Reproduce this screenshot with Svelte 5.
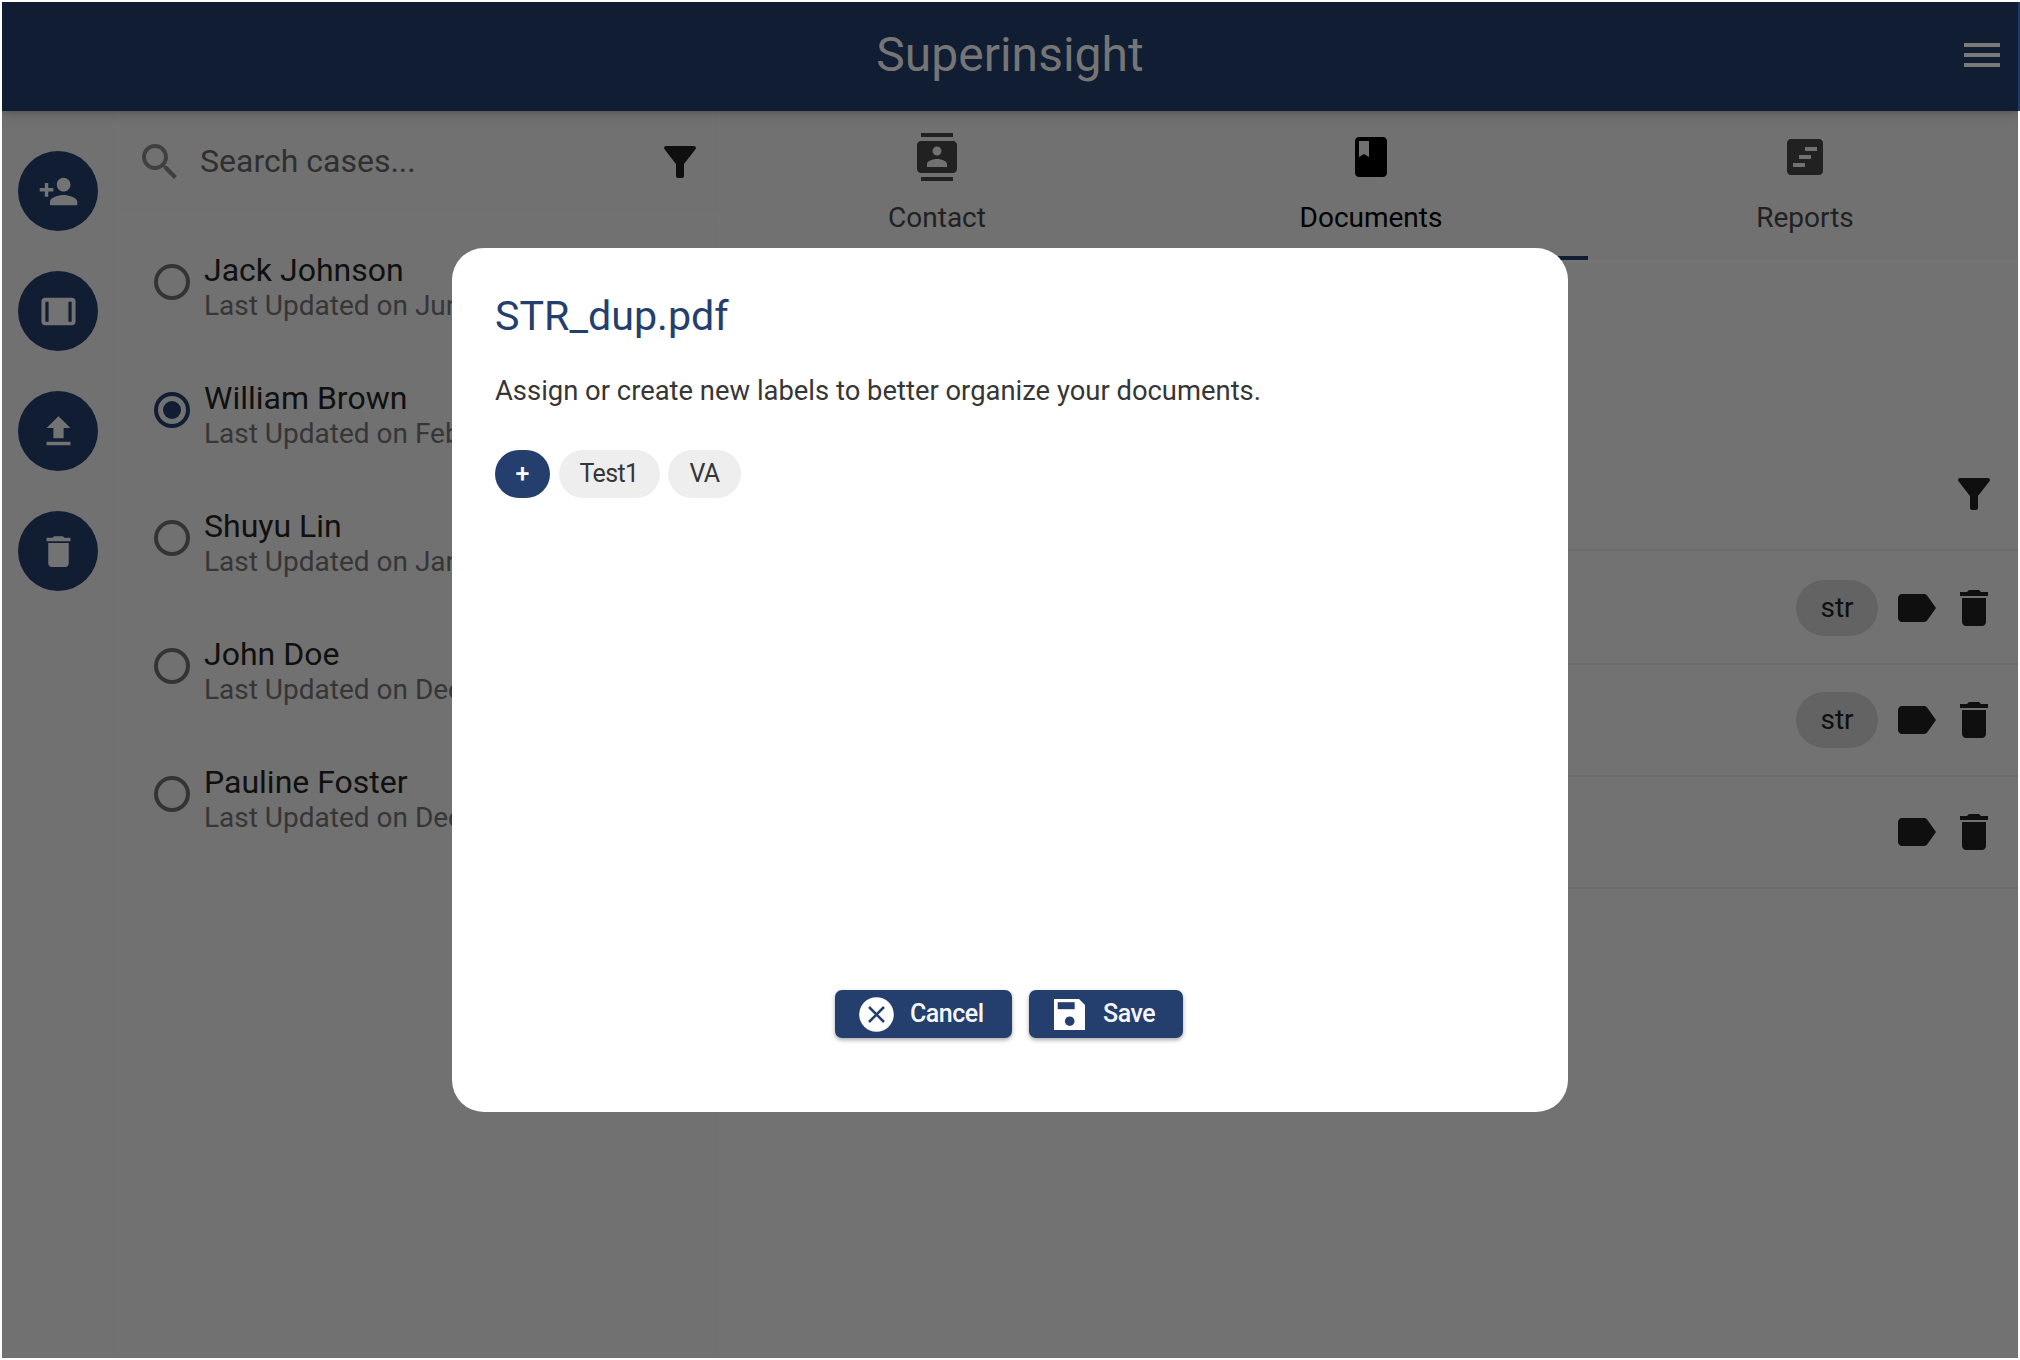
<script>
  const cases = [
    { name: 'Jack Johnson', updated: 'Last Updated on Jun' },
    { name: 'William Brown', updated: 'Last Updated on Feb', selected: true },
    { name: 'Shuyu Lin', updated: 'Last Updated on Jan' },
    { name: 'John Doe', updated: 'Last Updated on Dec' },
    { name: 'Pauline Foster', updated: 'Last Updated on Dec' }
  ];

  const icons = {
    personAdd: 'M15 12c2.21 0 4-1.79 4-4s-1.79-4-4-4-4 1.79-4 4 1.79 4 4 4zm-9-2V7H4v3H1v2h3v3h2v-3h3v-2H6zm9 4c-2.67 0-8 1.34-8 4v2h16v-2c0-2.66-5.33-4-8-4z',
    widthFull: 'M20 4H4c-1.1 0-2 .9-2 2v12c0 1.1.9 2 2 2h16c1.1 0 2-.9 2-2V6c0-1.1-.9-2-2-2zM4.3 18V6.3h1.9V18H4.3zm15.4 0h-1.9V6.3h1.9V18z',
    upload: 'M9 16h6v-6h4l-7-7-7 7h4v6zm-4 2h14v2H5v-2z',
    trash: 'M6 19c0 1.1.9 2 2 2h8c1.1 0 2-.9 2-2V7H6v12zM19 4h-3.5l-1-1h-5l-1 1H5v2h14V4z',
    search: 'M15.5 14h-.79l-.28-.27C15.41 12.59 16 11.11 16 9.5 16 5.91 13.09 3 9.5 3S3 5.91 3 9.5 5.91 16 9.5 16c1.61 0 3.09-.59 4.23-1.57l.27.28v.79l5 4.99L20.49 19l-4.99-5zm-6 0C7.01 14 5 11.99 5 9.5S7.01 5 9.5 5 14 7.01 14 9.5 11.99 14 9.5 14z',
    filter: 'M4.25 5.61C6.27 8.2 10 13 10 13v6c0 .55.45 1 1 1h2c.55 0 1-.45 1-1v-6s3.72-4.8 5.74-7.39c.51-.66.04-1.61-.79-1.61H5.04c-.83 0-1.3.95-.79 1.61z',
    label: 'M17.63 5.84C17.27 5.33 16.67 5 16 5L5 5.01C3.9 5.01 3 5.9 3 7v10c0 1.1.9 1.99 2 1.99L16 19c.67 0 1.27-.33 1.63-.84L22 12l-4.37-6.16z',
    menu: 'M3 18h18v-2H3v2zm0-5h18v-2H3v2zm0-7v2h18V6H3z',
    contacts: 'M20 0H4v2h16V0zM4 24h16v-2H4v2zM20 4H4c-1.1 0-2 .9-2 2v12c0 1.1.9 2 2 2h16c1.1 0 2-.9 2-2V6c0-1.1-.9-2-2-2zm-8 2.75c1.24 0 2.25 1.01 2.25 2.25s-1.01 2.25-2.25 2.25S9.75 10.24 9.75 9 10.76 6.75 12 6.75zM17 17H7v-1.5c0-1.67 3.33-2.5 5-2.5s5 .83 5 2.5V17z',
    book: 'M18 2H6c-1.1 0-2 .9-2 2v16c0 1.1.9 2 2 2h12c1.1 0 2-.9 2-2V4c0-1.1-.9-2-2-2zM6 4h5v8l-2.5-1.5L6 12V4z',
    report: 'M19 3H5c-1.1 0-2 .9-2 2v14c0 1.1.9 2 2 2h14c1.1 0 2-.9 2-2V5c0-1.1-.9-2-2-2zm-7 14H6v-2h6v2zm3-4H9v-2h6v2zm3-4h-6V7h6v2z'
  };

  const tabs = [
    { label: 'Contact', icon: icons.contacts },
    { label: 'Documents', icon: icons.book, active: true },
    { label: 'Reports', icon: icons.report }
  ];
  const actions = [icons.personAdd, icons.widthFull, icons.upload, icons.trash];
  const documents = [{ tag: 'str' }, { tag: 'str' }, {}];
</script>

{#snippet icon(d)}
  <svg class="icon" viewBox="0 0 24 24" fill="currentColor" fill-rule="evenodd"><path {d} /></svg>
{/snippet}

<div class="page">
  <div class="app">
    <header>
      <span></span>
      <h1>Superinsight</h1>
      <span class="menu">{@render icon(icons.menu)}</span>
    </header>
    <div class="body">
      <nav>
        {#each actions as d}
          <button class="fab">{@render icon(d)}</button>
        {/each}
      </nav>
      <section class="cases">
        <div class="search">
          <span class="lens">{@render icon(icons.search)}</span>
          <span class="hint">Search cases...</span>
          {@render icon(icons.filter)}
        </div>
        <ul>
          {#each cases as c}
            <li>
              <span class="radio" class:selected={c.selected}></span>
              <div class="case">
                <div class="name">{c.name}</div>
                <div class="updated">{c.updated}</div>
              </div>
            </li>
          {/each}
        </ul>
      </section>
      <main>
        <div class="tabs">
          {#each tabs as t}
            <div class="tab" class:active={t.active}>
              {@render icon(t.icon)}
              <span>{t.label}</span>
            </div>
          {/each}
        </div>
        <div class="toolbar">{@render icon(icons.filter)}</div>
        {#each documents as doc}
          <div class="doc">
            {#if doc.tag}<span class="tag">{doc.tag}</span>{/if}
            {@render icon(icons.label)}
            {@render icon(icons.trash)}
          </div>
        {/each}
      </main>
    </div>
  </div>

  <div class="backdrop">
    <div class="dialog">
      <h2>STR_dup.pdf</h2>
      <p>Assign or create new labels to better organize your documents.</p>
      <div class="chips">
        <span class="chip add">+</span>
        <span class="chip test">Test1</span>
        <span class="chip va">VA</span>
      </div>
      <div class="buttons">
        <button class="btn cancel">
          <svg viewBox="0 0 35 35"><circle cx="17.5" cy="17.5" r="17.3" fill="#fff" /><path d="M10 10 25 25M25 10 10 25" stroke="#243e6d" stroke-width="2.5" /></svg>
          Cancel
        </button>
        <button class="btn save">
          <svg viewBox="0 0 31 31"><path d="M0 0H25L31 6V31H0Z" fill="#fff" /><path d="M3.7 3.2H20.7V10.2H3.7Z" fill="#243e6d" /><circle cx="15.7" cy="22.2" r="4.8" fill="#243e6d" /></svg>
          Save
        </button>
      </div>
    </div>
  </div>
</div>

<style>
  .page {
    position: relative;
    box-sizing: border-box;
    width: 2020px;
    height: 1360px;
    padding: 2px;
    background: linear-gradient(90deg, #fff 0 2018px, #1f3b6e 2018px) 0 2px / 100% 109px no-repeat, #fff;
    font-family: Roboto, sans-serif;
    overflow: hidden;
  }
  .app {
    width: 2016px;
    height: 1356px;
    overflow: hidden;
    background: #717171;
    display: flex;
    flex-direction: column;
  }
  .icon { display: block; width: 48px; height: 48px; flex: none; }
  header {
    position: relative;
    z-index: 1;
    flex: none;
    height: 109.4px;
    display: grid;
    grid-template-columns: 1fr auto 1fr;
    align-items: center;
    background: #101d33;
    color: #757575;
    box-shadow: 0 4px 10px rgba(0, 0, 0, .15), 0 1px 4px rgba(0, 0, 0, .12);
  }
  h1 { margin: 0; padding-bottom: 4px; font-size: 48px; font-weight: 400; line-height: 54px; }
  .menu { justify-self: end; padding-bottom: 3px; margin-right: 12px; color: #7a7a7a; }
  .body { flex: 1; display: flex; min-height: 0; }
  nav {
    flex: none;
    box-sizing: border-box;
    width: 118px;
    padding: 40px 0 0 16px;
    display: flex;
    flex-direction: column;
    gap: 40px;
    border-right: 4px solid #727272;
  }
  .fab {
    width: 80px;
    height: 80px;
    padding: 0;
    border: 0;
    border-radius: 50%;
    background: #101d33;
    color: #737373;
    display: grid;
    place-items: center;
  }
  .fab .icon { width: 41px; height: 41px; }
  .cases { flex: none; width: 600px; border-right: 2px solid #727272; box-sizing: border-box; background: #717171; }
  .search {
    box-sizing: border-box;
    height: 105.6px;
    padding: 26.5px 14px 0 16px;
    display: flex;
    align-items: flex-start;
    border-bottom: 4px solid #727272;
    color: #0f0f0f;
  }
  .lens { color: #404040; }
  .hint { flex: 1; padding-left: 16px; font-size: 32px; line-height: 47px; color: #2f2f2f; }
  ul { list-style: none; margin: 0; padding: 34px 0 0 34px; }
  li { height: 128px; display: flex; gap: 14px; }
  .radio {
    flex: none;
    box-sizing: border-box;
    width: 36px;
    height: 36px;
    margin-top: 13px;
    border: 4px solid #343434;
    border-radius: 50%;
    display: grid;
    place-items: center;
  }
  .selected { border-color: #101d33; }
  .selected::after { content: ''; width: 18px; height: 18px; border-radius: 50%; background: #101d33; }
  .case { white-space: nowrap; }
  .name { font-size: 32px; line-height: 38px; color: #101010; }
  .updated { font-size: 28px; line-height: 34px; color: #363636; }
  main { flex: none; width: 1302px; background: #727272; }
  .tabs { display: flex; box-sizing: border-box; height: 152px; border-bottom: 3px solid #747474; background: #717171; }
  .tab {
    box-sizing: border-box;
    width: 434px;
    height: 149px;
    padding-top: 22px;
    display: flex;
    flex-direction: column;
    align-items: center;
    gap: 20px;
    border-bottom: 4.5px solid transparent;
    color: #212121;
    font-size: 28px;
    line-height: 34px;
  }
  .active { color: #000; border-color: #101d33; }
  .toolbar, .doc {
    box-sizing: border-box;
    height: 112px;
    padding: 1px 24px 0 0;
    display: flex;
    align-items: center;
    justify-content: flex-end;
    border-bottom: 2px solid #6b6b6b;
    color: #0f0f0f;
  }
  .toolbar { height: 287.6px; padding-top: 175px; }
  .toolbar + .doc { height: 114px; padding-top: 3px; }
  .doc { gap: 10px; }
  .tag {
    width: 82px;
    height: 56px;
    margin-right: 4px;
    border-radius: 28px;
    background: #636363;
    text-align: center;
    font-size: 28px;
    line-height: 56px;
  }
  .backdrop { position: absolute; inset: 0; display: flex; justify-content: center; align-items: center; }
  .dialog {
    box-sizing: border-box;
    width: 1116px;
    height: 864px;
    padding: 44px 42px 74px 43px;
    border-radius: 32px;
    background: #fff;
    display: flex;
    flex-direction: column;
  }
  h2 { margin: 0; font-size: 41.2px; font-weight: 400; line-height: 48px; color: #243e6d; }
  p { margin: 34px 0 0; font-size: 27.4px; line-height: 34px; color: #363636; }
  .chips { display: flex; gap: 8.5px; margin-top: 42px; }
  .chip {
    height: 48px;
    border-radius: 24px;
    background: #eee;
    color: #363636;
    text-align: center;
    font-size: 25px;
    line-height: 48px;
  }
  .add { width: 55px; background: #243e6d; color: #fff; font-weight: 500; }
  .test { width: 101px; letter-spacing: -.6px; }
  .va { width: 73px; letter-spacing: -.6px; }
  .buttons { margin: auto 3px 0 0; display: flex; justify-content: center; gap: 17px; }
  .btn {
    height: 48px;
    padding: 0;
    border: 0;
    border-radius: 7px;
    background: #243e6d;
    color: #f4f6f9;
    font: 500 25px/48px Roboto, sans-serif;
    letter-spacing: -.5px;
    display: flex;
    align-items: center;
    box-shadow: 0 2px 4px rgba(0, 0, 0, .35);
  }
  .cancel { width: 177px; padding-left: 24px; gap: 16px; }
  .cancel svg { width: 35px; height: 35px; }
  .save { width: 154px; padding-left: 25px; gap: 18px; }
  .save svg { width: 31px; height: 31px; }
</style>
